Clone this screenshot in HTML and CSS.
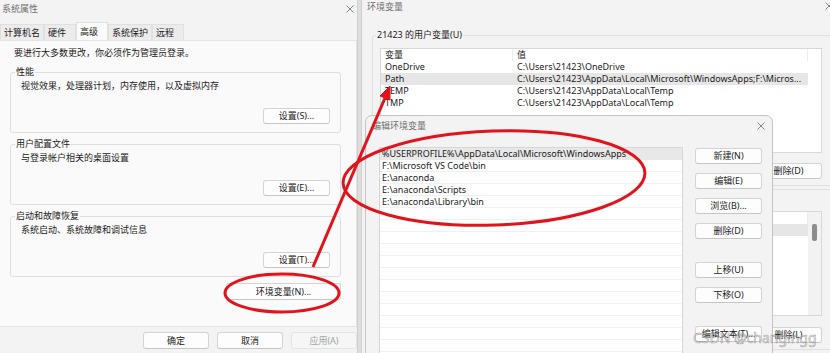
FILE: index.html
```html
<!DOCTYPE html>
<html lang="zh-CN">
<head>
  <meta charset="UTF-8" />
  <meta name="viewport" content="width=device-width, initial-scale=1.0"/>
  <title>环境变量设置</title>
  <link rel="stylesheet" href="styles.css">
</head>
<body>

  <div class="desktop">

    <!-- 系统属性 -->
    <section class="win sysprops">
      <header class="titlebar">
        <span>系统属性</span>
        <svg class="close" viewBox="0 0 8 8"><path d="M0.5 0.5 7.5 7.5 M7.5 0.5 0.5 7.5"/></svg>
      </header>
      <nav class="tabs">
        <span class="tab">计算机名</span>
        <span class="tab">硬件</span>
        <span class="tab on">高级</span>
        <span class="tab">系统保护</span>
        <span class="tab">远程</span>
      </nav>
      <div class="tabpanel">
        <p class="note">要进行大多数更改，你必须作为管理员登录。</p>
        <fieldset class="group sys-group">
          <legend>性能</legend>
          <p>视觉效果，处理器计划，内存使用，以及虚拟内存</p>
          <div class="btnrow"><button class="btn">设置(S)...</button></div>
        </fieldset>
        <fieldset class="group sys-group">
          <legend>用户配置文件</legend>
          <p>与登录帐户相关的桌面设置</p>
          <div class="btnrow"><button class="btn">设置(E)...</button></div>
        </fieldset>
        <fieldset class="group sys-group">
          <legend>启动和故障恢复</legend>
          <p>系统启动、系统故障和调试信息</p>
          <div class="btnrow"><button class="btn">设置(T)...</button></div>
        </fieldset>
        <div class="btnrow env-row"><button class="btn env-btn">环境变量(N)...</button></div>
      </div>
      <footer class="dlgbtns">
        <button class="btn">确定</button>
        <button class="btn">取消</button>
        <button class="btn" disabled>应用(A)</button>
      </footer>
    </section>

    <!-- 环境变量 -->
    <section class="win envvars">
      <header class="titlebar">
        <span>环境变量</span>
        <svg class="close" viewBox="0 0 8 8"><path d="M0.5 0.5 7.5 7.5 M7.5 0.5 0.5 7.5"/></svg>
      </header>
      <div class="env-body">
        <fieldset class="group env-group">
          <legend>21423 的用户变量(U)</legend>
          <div class="varlist">
            <div class="varcols">
              <div class="varrow varhead"><span class="col-name">变量</span><span class="col-val">值</span></div>
              <div class="varrow"><span class="col-name">OneDrive</span><span class="col-val">C:\Users\21423\OneDrive</span></div>
              <div class="varrow sel"><span class="col-name">Path</span><span class="col-val">C:\Users\21423\AppData\Local\Microsoft\WindowsApps;F:\Micros...</span></div>
              <div class="varrow"><span class="col-name">TEMP</span><span class="col-val">C:\Users\21423\AppData\Local\Temp</span></div>
              <div class="varrow"><span class="col-name">TMP</span><span class="col-val">C:\Users\21423\AppData\Local\Temp</span></div>
            </div>
          </div>
          <div class="btnrow env-btns">
            <button class="btn">新建(N)...</button>
            <button class="btn">编辑(E)...</button>
            <button class="btn">删除(D)</button>
          </div>
        </fieldset>
        <fieldset class="group env-group sys-vars">
          <legend>系统变量(S)</legend>
          <div class="varlist">
            <div class="varcols">
              <div class="varrow varhead"><span class="col-name">变量</span><span class="col-val">值</span></div>
              <div class="varrow sel"><span class="col-name">ComSpec</span><span class="col-val">C:\Windows\system32\cmd.exe</span></div>
              <div class="varrow"><span class="col-name">DriverData</span><span class="col-val">C:\Windows\System32\Drivers\DriverData</span></div>
              <div class="varrow"><span class="col-name">NUMBER_OF_PROCESSORS</span><span class="col-val">16</span></div>
              <div class="varrow"><span class="col-name">OS</span><span class="col-val">Windows_NT</span></div>
              <div class="varrow"><span class="col-name">Path</span><span class="col-val">C:\Windows\system32;C:\Windows</span></div>
            </div>
            <div class="vscroll"><div class="thumb"></div></div>
          </div>
          <div class="btnrow env-btns">
            <button class="btn">新建(W)...</button>
            <button class="btn">编辑(I)...</button>
            <button class="btn">删除(L)</button>
          </div>
        </fieldset>
      </div>
    </section>

    <!-- 编辑环境变量 -->
    <section class="win editvar">
      <header class="titlebar">
        <span>编辑环境变量</span>
        <svg class="close" viewBox="0 0 8 8"><path d="M0.5 0.5 7.5 7.5 M7.5 0.5 0.5 7.5"/></svg>
      </header>
      <div class="edit-body">
        <ul class="pathlist">
          <li class="sel">%USERPROFILE%\AppData\Local\Microsoft\WindowsApps</li>
          <li>F:\Microsoft VS Code\bin</li>
          <li>E:\anaconda</li>
          <li>E:\anaconda\Scripts</li>
          <li>E:\anaconda\Library\bin</li>
        </ul>
        <div class="edit-btns">
          <div class="btnstack">
            <button class="btn">新建(N)</button>
            <button class="btn">编辑(E)</button>
            <button class="btn">浏览(B)...</button>
            <button class="btn">删除(D)</button>
          </div>
          <div class="btnstack">
            <button class="btn">上移(U)</button>
            <button class="btn">下移(O)</button>
          </div>
          <div class="btnstack">
            <button class="btn">编辑文本(T)...</button>
          </div>
        </div>
      </div>
    </section>

    <!-- red marks drawn over the screenshot -->
    <svg class="marks" viewBox="0 0 830 353">
      <ellipse cx="494" cy="178" rx="151" ry="47" transform="rotate(-2 494 178)"/>
      <ellipse cx="282" cy="293" rx="57" ry="19"/>
      <line x1="313" y1="267" x2="385" y2="98"/>
      <polygon class="head" points="390,86 380,96 390,100"/>
    </svg>

    <div class="watermark">CSDN @changingg</div>
  </div>

</body>
</html>
```

FILE: styles.css
```css
* {
  box-sizing: border-box;
}

body {
  margin: 0;
  overflow: hidden;
  font-family: "Noto Sans", "Noto Sans CJK SC", sans-serif;
  font-size: 9px;
  color: #1b1b1b;
}

.desktop {
  position: relative;
  width: 830px;
  height: 353px;
  overflow: hidden;
  background: #dedede;
}

/* windows */
.win {
  position: absolute;
  display: flex;
  flex-direction: column;
  background: #f3f3f3;
  border: 1px solid #cfcfcf;
}

.titlebar {
  display: flex;
  align-items: center;
  justify-content: space-between;
  flex: none;
  color: #707070;
}

.close {
  width: 8px;
  height: 8px;
  fill: none;
  stroke: #858585;
  stroke-width: 1;
}

.btn {
  height: 16px;
  padding: 0;
  font: inherit;
  line-height: 14px;
  color: #1b1b1b;
  background: #fdfdfd;
  border: 1px solid #d4d4d4;
  border-bottom-color: #c6c6c6;
  border-radius: 3px;
  width: 67px;
}

.btn:disabled {
  color: #a3a3a3;
  background: #f6f6f6;
  border-color: #e4e4e4;
}

.btnrow {
  display: flex;
  justify-content: flex-end;
  gap: 8px;
}

.group {
  margin: 0;
  border: 1px solid #dedede;
  border-radius: 3px;
}

.group legend {
  padding: 0 1px;
  line-height: 12px;
}

/* 系统属性 */
.sysprops {
  left: 0;
  top: 0;
  width: 358px;
  height: 380px;
  border-width: 0 1px 0 0;
}

.sysprops .titlebar {
  height: 17px;
  padding: 0 3px 0 2px;
}

.tabs {
  display: flex;
  align-items: flex-end;
  height: 18px;
  margin-top: 5px;
  flex: none;
}

.tab {
  height: 16px;
  line-height: 15px;
  min-width: 32px;
  padding: 0 3px;
  background: #ececec;
  border: 1px solid #e0e0e0;
  border-bottom: none;
}

.tab.on {
  height: 18px;
  line-height: 17px;
  background: #fafafa;
}

.tabpanel {
  height: 287px;
  flex: none;
  padding: 6px 15px 0 10px;
  background: #fafafa;
  border: 1px solid #e4e4e4;
  border-left: none;
}

.note {
  margin: 0 0 7px 4px;
  line-height: 12px;
}

.sys-group {
  padding: 2px 10px 8px;
  margin-bottom: 5px;
}

.sys-group legend {
  margin-left: -6px;
}

.sys-group p {
  margin: 0;
  line-height: 12px;
}

.sys-group .btnrow {
  margin-top: 16px;
}

.env-row {
  margin-top: 6px;
}

.env-btn {
  width: 115px;
  height: 17px;
}

.dlgbtns {
  display: flex;
  justify-content: flex-end;
  gap: 8px;
  padding: 5px 0 0 0;
}

.dlgbtns .btn {
  width: 66px;
  height: 17px;
}

/* 环境变量 */
.envvars {
  left: 361px;
  top: -4px;
  width: 480px;
  height: 400px;
}

.envvars .titlebar {
  height: 18px;
  padding: 0 7px 0 5px;
}

.env-body {
  padding: 14px 0 0 10px;
}

.env-group {
  padding: 7px 0 6px 7px;
}

.env-group legend {
  margin-left: -4px;
}

.sys-vars {
  margin-top: -3px;
  padding-top: 16px;
}

.varlist {
  display: flex;
  width: 442px;
  height: 105px;
  background: #fff;
  border: 1px solid #d8d8d8;
}

.varcols {
  flex: 1;
  overflow: hidden;
}

.varrow {
  display: flex;
  width: 427px;
  height: 12px;
  line-height: 12px;
  white-space: nowrap;
}

.varrow.sel {
  background: #e6e6e6;
}

.col-name {
  width: 132px;
  padding-left: 4px;
  overflow: hidden;
  flex: none;
}

.col-val {
  width: 295px;
  padding-left: 4px;
  overflow: hidden;
  flex: none;
}

.varhead .col-name,
.varhead .col-val {
  border-right: 1px solid #ececec;
}

.vscroll {
  width: 13px;
  padding-top: 12px;
  background: #f2f2f2;
}

.thumb {
  width: 5px;
  height: 17px;
  margin: 0 auto;
  background: #8c8c8c;
  border-radius: 2px;
}

.env-btns {
  width: 442px;
  margin-top: 10px;
}

.sys-vars .env-btns {
  margin-top: 11px;
}

/* 编辑环境变量 */
.editvar {
  left: 365px;
  top: 115px;
  width: 408px;
  height: 260px;
  border-radius: 7px 7px 0 0;
  border-color: #c4c4c4;
}

.editvar .titlebar {
  height: 19px;
  padding: 0 7px 0 6px;
}

.edit-body {
  display: flex;
  gap: 12px;
  padding: 12px 10px 0 13px;
}

.pathlist {
  list-style: none;
  margin: 0;
  padding: 0;
  width: 304px;
  height: 260px;
  background: repeating-linear-gradient(#fff 0 11px, #f1f1f1 11px 12px);
  border: 1px solid #d6d6d6;
}

.pathlist li {
  height: 12px;
  line-height: 12px;
  padding-left: 2px;
  white-space: nowrap;
  overflow: hidden;
}

.pathlist li.sel {
  background: #e8e8e8;
}

.edit-btns {
  display: flex;
  flex-direction: column;
  gap: 23px;
  margin-top: 1px;
}

.btnstack {
  display: flex;
  flex-direction: column;
  gap: 9px;
}

/* annotations */
.marks {
  position: absolute;
  left: 0;
  top: 0;
  width: 830px;
  height: 353px;
  fill: none;
  stroke: #e3131b;
  stroke-width: 3;
}

.marks .head {
  fill: #e3131b;
  stroke-width: 1;
}

.watermark {
  position: absolute;
  left: 693px;
  top: 328px;
  font-size: 14px;
  color: rgba(255, 255, 255, 0.45);
  -webkit-text-stroke: 0.6px rgba(110, 110, 110, 0.65);
  white-space: nowrap;
}
```
